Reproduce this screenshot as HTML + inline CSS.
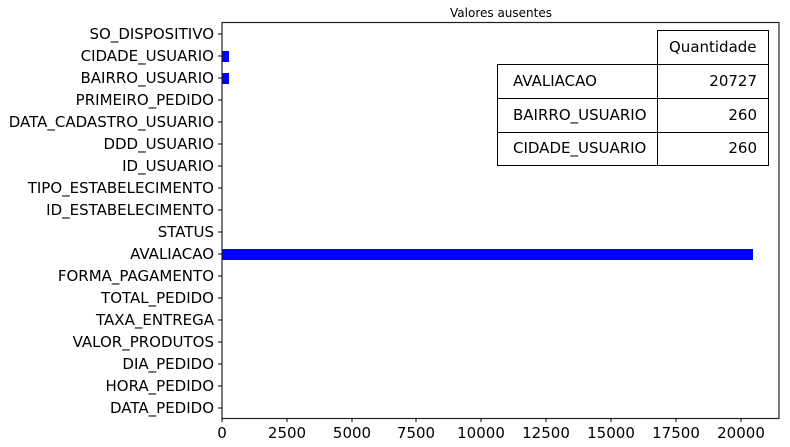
<!DOCTYPE html><html><head><style>body{margin:0;background:#fff}svg{display:block;font-family:"DejaVu Sans","Liberation Sans",sans-serif}</style></head><body>
<svg width="790" height="447" viewBox="0 0 790 447">
<text x="501" y="17" font-size="12" text-anchor="middle" fill="#000">Valores ausentes</text>
<g fill="#0000ff">
<rect x="222" y="51" width="7" height="11"/>
<rect x="222" y="73" width="7" height="11"/>
<rect x="222" y="249" width="531" height="11"/>
</g>
<rect x="222" y="22.5" width="557" height="396" fill="none" stroke="#222" stroke-width="1.2"/>
<g font-size="15" text-anchor="end" fill="#000">
<text x="214" y="39">SO_DISPOSITIVO</text>
<text x="214" y="61">CIDADE_USUARIO</text>
<text x="214" y="83">BAIRRO_USUARIO</text>
<text x="214" y="105">PRIMEIRO_PEDIDO</text>
<text x="214" y="127">DATA_CADASTRO_USUARIO</text>
<text x="214" y="149">DDD_USUARIO</text>
<text x="214" y="171">ID_USUARIO</text>
<text x="214" y="193">TIPO_ESTABELECIMENTO</text>
<text x="214" y="215">ID_ESTABELECIMENTO</text>
<text x="214" y="237">STATUS</text>
<text x="214" y="259">AVALIACAO</text>
<text x="214" y="281">FORMA_PAGAMENTO</text>
<text x="214" y="303">TOTAL_PEDIDO</text>
<text x="214" y="325">TAXA_ENTREGA</text>
<text x="214" y="347">VALOR_PRODUTOS</text>
<text x="214" y="369">DIA_PEDIDO</text>
<text x="214" y="391">HORA_PEDIDO</text>
<text x="214" y="413">DATA_PEDIDO</text>
</g>
<g stroke="#000" stroke-width="1">
<path d="M218 34H222M218 56H222M218 78H222M218 100H222M218 122H222M218 144H222M218 166H222M218 188H222M218 210H222M218 232H222M218 254H222M218 276H222M218 298H222M218 320H222M218 342H222M218 364H222M218 386H222M218 408H222"/>
<path d="M222 418v4M287 418v4M352 418v4M416 418v4M481 418v4M546 418v4M611 418v4M676 418v4M741 418v4"/>
</g>
<g font-size="15" text-anchor="middle" fill="#000">
<text x="222" y="438">0</text><text x="287" y="438">2500</text><text x="352" y="438">5000</text><text x="416" y="438">7500</text><text x="481" y="438">10000</text><text x="546" y="438">12500</text><text x="611" y="438">15000</text><text x="676" y="438">17500</text><text x="741" y="438">20000</text>
</g>
<g fill="#fff" stroke="#000" stroke-width="1">
<rect x="657.5" y="30.5" width="111" height="34"/>
<rect x="497.5" y="64.5" width="160" height="34"/><rect x="657.5" y="64.5" width="111" height="34"/>
<rect x="497.5" y="98.5" width="160" height="34"/><rect x="657.5" y="98.5" width="111" height="34"/>
<rect x="497.5" y="132.5" width="160" height="33"/><rect x="657.5" y="132.5" width="111" height="33"/>
</g>
<g font-size="15" fill="#000">
<text x="669" y="52">Quantidade</text>
<text x="513" y="86">AVALIACAO</text>
<text x="513" y="120">BAIRRO_USUARIO</text>
<text x="513" y="153">CIDADE_USUARIO</text>
<g text-anchor="end"><text x="757" y="86">20727</text><text x="757" y="120">260</text><text x="757" y="153">260</text></g>
</g>
</svg></body></html>
